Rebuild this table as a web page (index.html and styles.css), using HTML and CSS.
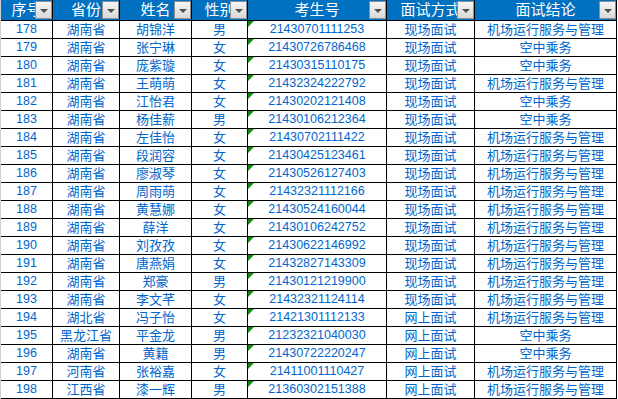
FILE: index.html
```html
<!DOCTYPE html>
<html lang="zh">
<head>
<meta charset="utf-8">
<title>面试名单</title>
<link rel="stylesheet" href="styles.css">
</head>
<body>
<div class="sheet">
  <div class="cell head">序号<span class="filter"></span></div>
  <div class="cell head">省份<span class="filter"></span></div>
  <div class="cell head">姓名<span class="filter"></span></div>
  <div class="cell head">性别<span class="filter"></span></div>
  <div class="cell head">考生号<span class="filter"></span></div>
  <div class="cell head">面试方式<span class="filter"></span></div>
  <div class="cell head">面试结论<span class="filter"></span></div>

  <div class="cell num">178</div><div class="cell">湖南省</div><div class="cell">胡锦洋</div><div class="cell">男</div><div class="cell num id">21430701111253</div><div class="cell">现场面试</div><div class="cell">机场运行服务与管理</div>
  <div class="cell num">179</div><div class="cell">湖南省</div><div class="cell">张宁琳</div><div class="cell">女</div><div class="cell num id">21430726786468</div><div class="cell">现场面试</div><div class="cell">空中乘务</div>
  <div class="cell num">180</div><div class="cell">湖南省</div><div class="cell">庞紫璇</div><div class="cell">女</div><div class="cell num id">21430315110175</div><div class="cell">现场面试</div><div class="cell">空中乘务</div>
  <div class="cell num">181</div><div class="cell">湖南省</div><div class="cell">王萌萌</div><div class="cell">女</div><div class="cell num id">21432324222792</div><div class="cell">现场面试</div><div class="cell">机场运行服务与管理</div>
  <div class="cell num">182</div><div class="cell">湖南省</div><div class="cell">江怡君</div><div class="cell">女</div><div class="cell num id">21430202121408</div><div class="cell">现场面试</div><div class="cell">空中乘务</div>
  <div class="cell num">183</div><div class="cell">湖南省</div><div class="cell">杨佳薪</div><div class="cell">男</div><div class="cell num id">21430106212364</div><div class="cell">现场面试</div><div class="cell">空中乘务</div>
  <div class="cell num">184</div><div class="cell">湖南省</div><div class="cell">左佳怡</div><div class="cell">女</div><div class="cell num id">21430702111422</div><div class="cell">现场面试</div><div class="cell">机场运行服务与管理</div>
  <div class="cell num">185</div><div class="cell">湖南省</div><div class="cell">段润容</div><div class="cell">女</div><div class="cell num id">21430425123461</div><div class="cell">现场面试</div><div class="cell">机场运行服务与管理</div>
  <div class="cell num">186</div><div class="cell">湖南省</div><div class="cell">廖淑琴</div><div class="cell">女</div><div class="cell num id">21430526127403</div><div class="cell">现场面试</div><div class="cell">机场运行服务与管理</div>
  <div class="cell num">187</div><div class="cell">湖南省</div><div class="cell">周雨萌</div><div class="cell">女</div><div class="cell num id">21432321112166</div><div class="cell">现场面试</div><div class="cell">机场运行服务与管理</div>
  <div class="cell num">188</div><div class="cell">湖南省</div><div class="cell">黄慧娜</div><div class="cell">女</div><div class="cell num id">21430524160044</div><div class="cell">现场面试</div><div class="cell">机场运行服务与管理</div>
  <div class="cell num">189</div><div class="cell">湖南省</div><div class="cell">薛洋</div><div class="cell">女</div><div class="cell num id">21430106242752</div><div class="cell">现场面试</div><div class="cell">机场运行服务与管理</div>
  <div class="cell num">190</div><div class="cell">湖南省</div><div class="cell">刘孜孜</div><div class="cell">女</div><div class="cell num id">21430622146992</div><div class="cell">现场面试</div><div class="cell">机场运行服务与管理</div>
  <div class="cell num">191</div><div class="cell">湖南省</div><div class="cell">唐燕娟</div><div class="cell">女</div><div class="cell num id">21432827143309</div><div class="cell">现场面试</div><div class="cell">机场运行服务与管理</div>
  <div class="cell num">192</div><div class="cell">湖南省</div><div class="cell">郑豪</div><div class="cell">男</div><div class="cell num id">21430121219900</div><div class="cell">现场面试</div><div class="cell">机场运行服务与管理</div>
  <div class="cell num">193</div><div class="cell">湖南省</div><div class="cell">李文芊</div><div class="cell">女</div><div class="cell num id">21432321124114</div><div class="cell">现场面试</div><div class="cell">机场运行服务与管理</div>
  <div class="cell num">194</div><div class="cell">湖北省</div><div class="cell">冯子怡</div><div class="cell">女</div><div class="cell num id">21421301112133</div><div class="cell">网上面试</div><div class="cell">机场运行服务与管理</div>
  <div class="cell num">195</div><div class="cell">黑龙江省</div><div class="cell">平金龙</div><div class="cell">男</div><div class="cell num id">21232321040030</div><div class="cell">网上面试</div><div class="cell">空中乘务</div>
  <div class="cell num">196</div><div class="cell">湖南省</div><div class="cell">黄籍</div><div class="cell">男</div><div class="cell num id">21430722220247</div><div class="cell">网上面试</div><div class="cell">空中乘务</div>
  <div class="cell num">197</div><div class="cell">河南省</div><div class="cell">张裕嘉</div><div class="cell">女</div><div class="cell num id">21411001110427</div><div class="cell">网上面试</div><div class="cell">机场运行服务与管理</div>
  <div class="cell num">198</div><div class="cell">江西省</div><div class="cell">漆一辉</div><div class="cell">男</div><div class="cell num id">21360302151388</div><div class="cell">网上面试</div><div class="cell">机场运行服务与管理</div>
</div>
</body>
</html>
```

FILE: styles.css
```css
html, body {
  margin: 0;
  padding: 0;
  background: #ffffff;
}

body {
  font-family: "Liberation Sans", "Noto Sans CJK SC", sans-serif;
}

.sheet {
  display: grid;
  grid-template-columns: 52px 67px 72px 56px 139px 88px 142px;
  grid-template-rows: 21px;
  grid-auto-rows: 18px;
  width: max-content;
  border-left: 1px solid #d0d0d0;
}

.cell {
  box-sizing: border-box;
  position: relative;
  display: flex;
  align-items: center;
  justify-content: center;
  border-right: 1px solid #000;
  border-bottom: 1px solid #000;
  color: #0066cc;
  font-size: 13px;
  line-height: 1;
  white-space: nowrap;
  overflow: hidden;
}

.num {
  font-size: 12.5px;
}

.head {
  background: #0070c0;
  color: #ffffff;
  font-size: 15px;
  padding-bottom: 1px;
}

.filter {
  position: absolute;
  right: 0;
  top: 1px;
  width: 17px;
  height: 18px;
  box-sizing: border-box;
  border: 1px solid #8f8f8f;
  background: linear-gradient(#f6f6f6, #d8d8d8);
}

.filter::after {
  content: "";
  position: absolute;
  left: 4px;
  top: 7px;
  border-left: 4px solid transparent;
  border-right: 4px solid transparent;
  border-top: 4px solid #505050;
}

.id::before {
  content: "";
  position: absolute;
  left: 0;
  top: 0;
  border-top: 6px solid #0f8a0f;
  border-right: 6px solid transparent;
}
```
